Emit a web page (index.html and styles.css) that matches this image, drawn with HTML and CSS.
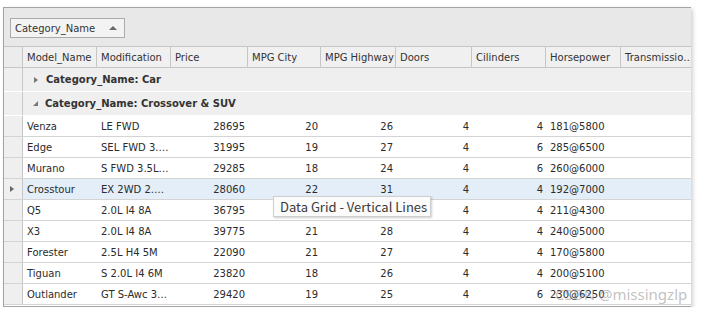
FILE: index.html
```html
<!DOCTYPE html>
<html>
<head>
<meta charset="utf-8">
<link rel="stylesheet" href="styles.css">
</head>
<body>
<div class="window">
  <div class="group-panel">
    <div class="group-btn"><span>Category_Name</span><span class="sort-up"></span></div>
  </div>
  <div class="row header">
    <div class="ind"></div>
    <div class="hc">Model_Name</div>
    <div class="hc">Modification</div>
    <div class="hc">Price</div>
    <div class="hc">MPG City</div>
    <div class="hc">MPG Highway</div>
    <div class="hc">Doors</div>
    <div class="hc">Cilinders</div>
    <div class="hc">Horsepower</div>
    <div class="hc last">Transmissio…</div>
  </div>
  <div class="grow collapsed"><div class="ind"></div><div class="gcell"><span class="tri-right"></span>Category_Name: Car</div></div>
  <div class="grow"><div class="ind"></div><div class="gcell"><span class="tri-down"></span>Category_Name: Crossover &amp; SUV</div></div>

  <div class="row data"><div class="ind"></div><div class="c">Venza</div><div class="c">LE FWD</div><div class="c r">28695</div><div class="c r">20</div><div class="c r">26</div><div class="c r">4</div><div class="c r">4</div><div class="c">181@5800</div><div class="c"></div></div>
  <div class="row data"><div class="ind"></div><div class="c">Edge</div><div class="c">SEL FWD 3.…</div><div class="c r">31995</div><div class="c r">19</div><div class="c r">27</div><div class="c r">4</div><div class="c r">6</div><div class="c">285@6500</div><div class="c"></div></div>
  <div class="row data"><div class="ind"></div><div class="c">Murano</div><div class="c">S FWD 3.5L…</div><div class="c r">29285</div><div class="c r">18</div><div class="c r">24</div><div class="c r">4</div><div class="c r">6</div><div class="c">260@6000</div><div class="c"></div></div>
  <div class="row data focused"><div class="ind"><span class="tri-right"></span></div><div class="c">Crosstour</div><div class="c">EX 2WD 2.…</div><div class="c r">28060</div><div class="c r">22</div><div class="c r">31</div><div class="c r">4</div><div class="c r">4</div><div class="c">192@7000</div><div class="c"></div></div>
  <div class="row data"><div class="ind"></div><div class="c">Q5</div><div class="c">2.0L I4 8A</div><div class="c r">36795</div><div class="c r">21</div><div class="c r">29</div><div class="c r">4</div><div class="c r">4</div><div class="c">211@4300</div><div class="c"></div></div>
  <div class="row data"><div class="ind"></div><div class="c">X3</div><div class="c">2.0L I4 8A</div><div class="c r">39775</div><div class="c r">21</div><div class="c r">28</div><div class="c r">4</div><div class="c r">4</div><div class="c">240@5000</div><div class="c"></div></div>
  <div class="row data"><div class="ind"></div><div class="c">Forester</div><div class="c">2.5L H4 5M</div><div class="c r">22090</div><div class="c r">21</div><div class="c r">27</div><div class="c r">4</div><div class="c r">4</div><div class="c">170@5800</div><div class="c"></div></div>
  <div class="row data"><div class="ind"></div><div class="c">Tiguan</div><div class="c">S 2.0L I4 6M</div><div class="c r">23820</div><div class="c r">18</div><div class="c r">26</div><div class="c r">4</div><div class="c r">4</div><div class="c">200@5100</div><div class="c"></div></div>
  <div class="row data"><div class="ind"></div><div class="c">Outlander</div><div class="c">GT S-Awc 3…</div><div class="c r">29420</div><div class="c r">19</div><div class="c r">25</div><div class="c r">4</div><div class="c r">6</div><div class="c">230@6250</div><div class="c"></div></div>

  <div class="tooltip">Data Grid - Vertical Lines</div>
  <div class="watermark">CSDN @missingzlp</div>
</div>
</body>
</html>
```
FILE: styles.css
```css
html, body {
  margin: 0;
  padding: 0;
  background: #ffffff;
}
body {
  font-family: "DejaVu Sans", Tahoma, sans-serif;
  font-size: 10px;
  color: #2b2b2b;
}
.window {
  position: relative;
  margin: 7px 0 0 3px;
  width: 687px;
  height: 298px;
  border-top: 1px solid #a3a3a3;
  border-left: 1px solid #a3a3a3;
  border-bottom: 1px solid #a3a3a3;
  background: #ffffff;
  overflow: hidden;
  box-shadow: 2px 2px 4px rgba(0,0,0,0.18);
}
.group-panel {
  height: 38px;
  background: #e8e8e8;
  display: flex;
  align-items: flex-start;
  padding: 10px 0 0 6px;
  box-sizing: border-box;
}
.group-btn {
  width: 115px;
  height: 20px;
  box-sizing: border-box;
  border: 1px solid #ababab;
  background: #f3f3f3;
  display: flex;
  align-items: center;
  padding-left: 4px;
  gap: 14px;
  color: #333;
}
.sort-up {
  width: 0;
  height: 0;
  border-left: 4px solid transparent;
  border-right: 4px solid transparent;
  border-bottom: 4px solid #6a6a6a;
}
.row {
  display: grid;
  grid-template-columns: 19px 74px 74px 77px 73px 75px 76px 74px 75px 70px;
}
.header {
  height: 20px;
  background: #f0f0f0;
  border-top: 1px solid #c6c6c6;
  border-bottom: 1px solid #c6c6c6;
  box-sizing: content-box;
}
.header .ind {
  border-right: 1px solid #c6c6c6;
  background: #ececec;
}
.hc {
  border-right: 1px solid #c6c6c6;
  padding-left: 4px;
  display: flex;
  align-items: center;
  white-space: nowrap;
  overflow: hidden;
  color: #333;
}
.hc.last { border-right: none; }
.ind {
  background: #efefef;
  border-right: 1px solid #c6c6c6;
  display: flex;
  align-items: center;
  justify-content: center;
}
.grow {
  display: grid;
  grid-template-columns: 19px 1fr;
  height: 23px;
  border-bottom: 1px solid #ffffff;
}
.grow .ind { border-right: 1px solid #c6c6c6; }
.gcell {
  background: #efefef;
  display: flex;
  align-items: center;
  padding-left: 11px;
  font-weight: bold;
  color: #333;
  white-space: nowrap;
}
.tri-right {
  width: 0;
  height: 0;
  border-top: 3.5px solid transparent;
  border-bottom: 3.5px solid transparent;
  border-left: 4px solid #777;
  margin-right: 8px;
}
.ind .tri-right { margin: 0 0 0 -2px; border-left-color: #666; }
.tri-down {
  width: 0;
  height: 0;
  border-left: 5px solid transparent;
  border-bottom: 5px solid #777;
  margin-right: 7px;
  margin-left: -1px;
}
.data {
  height: 20px;
  border-bottom: 1px solid #d4d4d4;
}
.data .c {
  padding: 0 4px;
  display: flex;
  align-items: center;
  white-space: nowrap;
  overflow: hidden;
}
.data .c.r { justify-content: flex-end; padding-right: 3px; }
.focused .c { background: #e3eef8; }
.tooltip {
  position: absolute;
  left: 269px;
  top: 188px;
  width: 158px;
  height: 21px;
  box-sizing: border-box;
  background: #fbfbfb;
  border: 1px solid #cfcfcf;
  box-shadow: 1px 1px 2px rgba(0,0,0,0.2);
  font-family: "Noto Sans CJK SC", "Noto Sans", sans-serif;
  font-size: 13px;
  color: #3a3a3a;
  display: flex;
  align-items: center;
  padding-left: 6px;
  white-space: nowrap;
}
.watermark {
  position: absolute;
  left: 551px;
  top: 276px;
  font-family: "Noto Sans", sans-serif;
  font-size: 15px;
  color: rgba(140,140,140,0.55);
  white-space: nowrap;
}
```
